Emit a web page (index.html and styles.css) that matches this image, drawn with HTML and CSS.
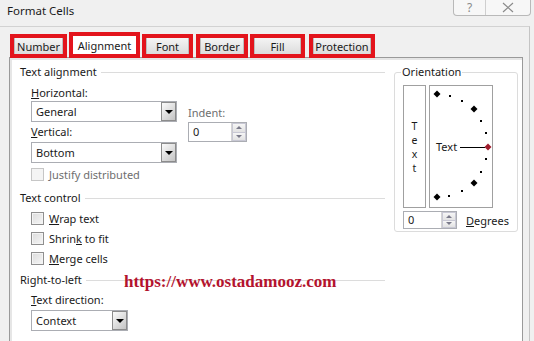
FILE: index.html
```html
<!DOCTYPE html>
<html lang="en">
<head>
<meta charset="UTF-8">
<title>Format Cells</title>
<link rel="stylesheet" href="styles.css">
</head>
<body>

<div class="titlebar">
    <span class="title">Format Cells</span>
    <div class="caption">
        <span class="cap-btn">?</span>
        <span class="cap-btn">
            <svg width="12" height="11" viewBox="0 0 12 11"><path d="M1 1 L11 10 M11 1 L1 10" stroke="#8a8a8a" stroke-width="1.2" fill="none"/></svg>
        </span>
    </div>
</div>

<div class="frame">
    <div class="tabs">
        <div class="mark m-number"><span class="tab">Number</span></div>
        <div class="mark m-align"><span class="tab active">Alignment</span></div>
        <div class="mark m-font"><span class="tab">Font</span></div>
        <div class="mark m-border"><span class="tab">Border</span></div>
        <div class="mark m-fill"><span class="tab">Fill</span></div>
        <div class="mark m-prot"><span class="tab">Protection</span></div>
    </div>

    <div class="panel">
        <div class="left">
            <div class="heading">Text alignment</div>
            <div class="align-grid">
                <div class="label lbl-h"><u>H</u>orizontal:</div>
                <div class="select sel-wide sel-h"><span class="value">General</span><span class="arrow"></span></div>
                <div class="label dim indent-lbl">Indent:</div>
                <div class="label lbl-v"><u>V</u>ertical:</div>
                <div class="spin indent-spin"><span class="value">0</span><span class="spin-btns"><i class="up"></i><i class="down"></i></span></div>
                <div class="select sel-wide sel-v"><span class="value">Bottom</span><span class="arrow"></span></div>
            </div>
            <div class="check-row justify">
                <span class="box disabled"></span><span class="dim">Justify distributed</span>
            </div>

            <div class="heading h-control">Text control</div>
            <div class="check-row first"><span class="box"></span><span><u>W</u>rap text</span></div>
            <div class="check-row"><span class="box"></span><span>Shrin<u>k</u> to fit</span></div>
            <div class="check-row"><span class="box"></span><span><u>M</u>erge cells</span></div>

            <div class="heading h-rtl">Right-to-left</div>
            <div class="label lbl-dir"><u>T</u>ext direction:</div>
            <div class="select sel-small"><span class="value">Context</span><span class="arrow"></span></div>
        </div>

        <fieldset class="orient">
            <legend>Orientation</legend>
            <div class="orient-boxes">
                <div class="vtext">
                    <span>T</span><span>e</span><span>x</span><span>t</span>
                </div>
                <div class="dial">
                    <svg width="62" height="121" viewBox="0 0 62 121">
                        <g fill="#000">
                            <path d="M7 4.5 L10.5 8 L7 11.5 L3.5 8 Z"/>
                            <path d="M44 19.5 L47.5 23 L44 26.5 L40.5 23 Z"/>
                            <path d="M44 93.5 L47.5 97 L44 100.5 L40.5 97 Z"/>
                            <path d="M7 107.5 L10.5 111 L7 114.5 L3.5 111 Z"/>
                            <rect x="19" y="9" width="2" height="2"/>
                            <rect x="31" y="14" width="2" height="2"/>
                            <rect x="50" y="34" width="2" height="2"/>
                            <rect x="55" y="46" width="2" height="2"/>
                            <rect x="55" y="72" width="2" height="2"/>
                            <rect x="50" y="85" width="2" height="2"/>
                            <rect x="31" y="104" width="2" height="2"/>
                            <rect x="18" y="109" width="2" height="2"/>
                        </g>
                        <line x1="30" y1="61.5" x2="55" y2="61.5" stroke="#000" stroke-width="1"/>
                        <path d="M58 57.5 L61.5 61 L58 64.5 L54.5 61 Z" fill="#a01c2c"/>
                    </svg>
                    <span class="dial-text">Text</span>
                </div>
            </div>
            <div class="degrees">
                <div class="spin deg-spin"><span class="value">0</span><span class="spin-btns"><i class="up"></i><i class="down"></i></span></div>
                <span><u>D</u>egrees</span>
            </div>
        </fieldset>
    </div>
</div>

<div class="watermark">https://www.ostadamooz.com</div>

</body>
</html>
```

FILE: styles.css
```css
body {
    margin: 0;
    background-color: #f0f0f0;
    font-family: "Noto Sans", Arial, sans-serif;
    font-size: 11px;
    color: #1a1a1a;
    overflow: hidden;
    height: 341px;
    position: relative;
}

.titlebar {
    height: 26px;
    display: flex;
    justify-content: space-between;
    align-items: flex-start;
    padding-left: 7px;
}

.title {
    font-size: 11.5px;
    line-height: 22px;
}

.caption {
    display: flex;
    margin-right: 3px;
    border: 1px solid #b9b9b9;
    border-top: none;
    border-radius: 0 0 4px 4px;
    background-color: #f7f7f7;
}

.cap-btn {
    width: 31px;
    height: 15px;
    display: flex;
    align-items: center;
    justify-content: center;
    color: #8a8a8a;
    font-size: 12px;
}

.cap-btn + .cap-btn {
    width: 44px;
    border-left: 1px solid #cfcfcf;
}

.frame {
    margin-right: 4px;
    border-top: 1px solid #d2d2d2;
    border-right: 1px solid #c4c4c4;
    padding: 5px 0 0 9px;
    height: 320px;
}

/* tabs, each one framed in a red marker box */
.tabs {
    display: flex;
    align-items: flex-end;
    height: 26px;
    margin-bottom: -1px;
    margin-left: 1px;
}

.mark {
    position: relative;
    z-index: 1;
    box-sizing: border-box;
    height: 24px;
    border: 4px solid #e3141c;
    display: flex;
    margin-right: 2px;
}

.m-number { width: 57px; }
.m-align { width: 71px; height: 26px; }
.m-font { width: 51px; }
.m-border { width: 52px; margin-left: 1px; }
.m-fill { width: 55px; }
.m-prot { width: 66px; margin-left: 2px; }

.tab {
    flex: 1;
    display: flex;
    align-items: center;
    justify-content: center;
    background: linear-gradient(#f4f4f4, #dcdcdc);
    border-left: 1px solid #bdbdbd;
    border-right: 1px solid #bdbdbd;
    font-size: 11px;
    padding-top: 1px;
}

.tab.active {
    background: #ffffff;
    border: none;
}

.panel {
    box-sizing: border-box;
    width: 514px;
    height: 290px;
    background-color: #ffffff;
    border: 1px solid #9a9a9a;
    box-shadow: inset 2px 2px 0 #e6e6e6;
    display: flex;
    align-items: flex-start;
    padding: 6px 0 0 10px;
}

.left {
    width: 365px;
    display: flex;
    flex-direction: column;
    align-items: flex-start;
}

.heading {
    align-self: stretch;
    height: 16px;
    line-height: 16px;
    display: flex;
    align-items: center;
    gap: 4px;
}

.heading::after {
    content: "";
    flex: 1;
    height: 1px;
    background-color: #dcdcdc;
}

.h-control { margin-top: 7px; }
.h-rtl { margin-top: 4px; }

.label {
    height: 17px;
    line-height: 17px;
}

.dim {
    color: #6e6e6e;
}

.align-grid {
    display: grid;
    grid-template-columns: 146px 59px;
    grid-template-rows: 17px 21px 20px 21px;
    column-gap: 11px;
    margin: 4px 0 0 11px;
}

.lbl-h { grid-column: 1; grid-row: 1; }
.sel-h { grid-column: 1; grid-row: 2; }
.lbl-v { grid-column: 1; grid-row: 3; line-height: 20px; height: 20px; }
.sel-v { grid-column: 1; grid-row: 4; }
.indent-lbl { grid-column: 2; grid-row: 2; align-self: center; padding-top: 2px; }
.indent-spin { grid-column: 2; grid-row: 3; }

.select {
    box-sizing: border-box;
    height: 21px;
    border: 1px solid #abadb3;
    display: flex;
    align-items: stretch;
    background-color: #ffffff;
}

.sel-wide { width: 146px; }
.sel-small { width: 97px; margin: 2px 0 0 11px; }

.select .value {
    flex: 1;
    padding-left: 4px;
    line-height: 19px;
}

.arrow {
    width: 13px;
    border: 1px solid #8c8c8c;
    background: linear-gradient(135deg, #fbfbfb 0%, #e2e2e2 45%, #c4c4c4 100%);
    display: flex;
    align-items: center;
    justify-content: center;
}

.arrow::before {
    content: "";
    border-left: 4px solid transparent;
    border-right: 4px solid transparent;
    border-top: 4px solid #000;
}

.spin {
    box-sizing: border-box;
    border: 1px solid #abadb3;
    background-color: #ffffff;
    display: flex;
    align-items: stretch;
}

.indent-spin {
    width: 59px;
    height: 20px;
}

.spin .value {
    flex: 1;
    padding-left: 4px;
    line-height: 18px;
}

.spin-btns {
    width: 14px;
    display: flex;
    flex-direction: column;
    border-left: 1px solid #d4d4d4;
}

.spin-btns i {
    flex: 1;
    display: flex;
    align-items: center;
    justify-content: center;
    background: linear-gradient(#f6f6f6, #e2e2e2);
    border: 1px solid #c8c8d4;
}

.spin-btns i + i {
    border-top: none;
}

.spin-btns .up::before {
    content: "";
    border-left: 3px solid transparent;
    border-right: 3px solid transparent;
    border-bottom: 3px solid #7a7a8a;
}

.spin-btns .down::before {
    content: "";
    border-left: 3px solid transparent;
    border-right: 3px solid transparent;
    border-top: 3px solid #7a7a8a;
}

.check-row {
    height: 20px;
    display: flex;
    align-items: center;
    gap: 5px;
    margin-left: 11px;
}

.check-row.justify {
    height: 17px;
    margin-top: 3px;
}

.check-row.first {
    margin-top: 2px;
}

.box {
    box-sizing: border-box;
    width: 13px;
    height: 13px;
    border: 1px solid #8f8f8f;
    background: linear-gradient(135deg, #dcdcdc, #f6f6f6);
    box-shadow: inset 0 0 0 1px #f4f4f4;
}

.box.disabled {
    border-color: #c6c6c6;
    background: #f4f4f4;
}

.lbl-dir {
    margin: 4px 0 0 11px;
    height: 16px;
    line-height: 16px;
}

/* orientation group */
.orient {
    width: 120px;
    box-sizing: border-box;
    margin: 0 0 0 9px;
    padding: 0 8px 2px 8px;
    border: 1px solid #dcdcdc;
    border-radius: 3px;
}

.orient legend {
    padding: 0 1px;
    margin-left: -2px;
    line-height: 16px;
}

.orient-boxes {
    display: flex;
    gap: 3px;
    margin-top: 5px;
}

.vtext {
    box-sizing: border-box;
    width: 23px;
    height: 123px;
    border: 1px solid #a0a0a0;
    display: flex;
    flex-direction: column;
    align-items: center;
    justify-content: center;
    font-size: 10.5px;
    line-height: 14px;
}

.dial {
    position: relative;
    box-sizing: border-box;
    width: 64px;
    height: 123px;
    border: 1px solid #a0a0a0;
}

.dial svg {
    display: block;
}

.dial-text {
    position: absolute;
    left: 6px;
    top: 53px;
    line-height: 16px;
}

.degrees {
    display: flex;
    align-items: center;
    gap: 9px;
    margin-top: 3px;
    height: 18px;
}

.deg-spin {
    width: 54px;
    height: 18px;
}

.deg-spin .value {
    line-height: 16px;
}

.watermark {
    position: absolute;
    left: 124px;
    top: 271px;
    font-family: "Liberation Serif", "Times New Roman", serif;
    font-weight: bold;
    font-size: 17px;
    line-height: 22px;
    color: #b3132e;
}
```
